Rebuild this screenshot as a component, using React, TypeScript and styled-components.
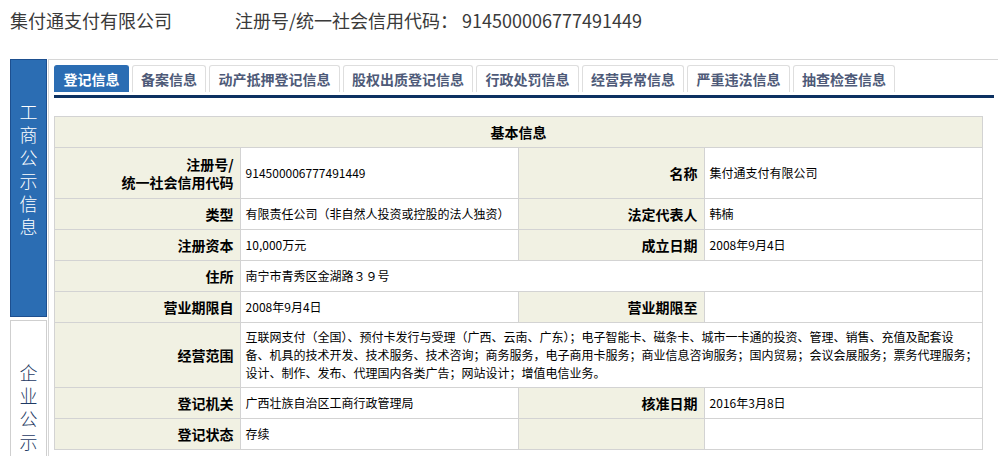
import styled, { createGlobalStyle } from 'styled-components';

const GlobalStyle = createGlobalStyle`
	body {
		margin: 0;
		background: #fff;
		overflow: hidden;
		font-family: "Noto Sans CJK SC", "Liberation Sans", sans-serif;
	}
`;

const Page = styled.div`
	padding: 0 0 0 10px;
`;

const TopBar = styled.div`
	height: 40px;
	display: flex;
	align-items: center;
	font-size: 18px;
	color: #3a3a3a;
	margin-bottom: 19px;
`;

const CompanyName = styled.span`
	width: 225px;
`;

const Body = styled.div`
	display: flex;
	align-items: flex-start;
`;

const SideNav = styled.div`
	width: 37px;
	display: flex;
	flex-direction: column;
	gap: 3px;
	margin-right: 1px;
`;

const SideItem = styled.div<{ $active?: boolean }>`
	box-sizing: border-box;
	height: ${(p) => (p.$active ? '258px' : '160px')};
	border: 1px solid ${(p) => (p.$active ? '#1d4f8f' : '#cfcfcf')};
	background: ${(p) => (p.$active ? '#2b6db3' : '#fff')};
	color: ${(p) => (p.$active ? '#fff' : '#1e3a64')};
	font-size: 18px;
	line-height: 23px;
	text-align: center;
	padding: 40px 8px 0;
	word-break: break-all;
	font-weight: 300;
`;

const Panel = styled.div`
	flex: 1;
	border-top: 1px solid #d6d6d6;
	border-left: 1px solid #d6d6d6;
	padding: 5px 4px 0 5px;
	min-height: 420px;
`;

const TabList = styled.ul`
	list-style: none;
	margin: 0;
	padding: 0 0 3px;
	display: flex;
	gap: 3px;
	border-bottom: 3px solid #0c3161;
`;

const Tab = styled.li<{ $active?: boolean }>`
	box-sizing: border-box;
	height: 27px;
	padding: 0 8px 0 8.5px;
	border: 1px solid ${(p) => (p.$active ? '#2b6db3' : '#dedede')};
	border-bottom: none;
	border-radius: 3px 3px 0 0;
	background: ${(p) => (p.$active ? '#2b6db3' : '#fff')};
	color: ${(p) => (p.$active ? '#fff' : '#4e5a78')};
	font-size: 14px;
	font-weight: 700;
	line-height: 26px;
	white-space: nowrap;
`;

const InfoTable = styled.table`
	width: 929px;
	margin-top: 18px;
	border-collapse: collapse;
	table-layout: fixed;
	border: 1px solid #d3d3d3;
`;

const HeadCell = styled.th`
	background: #f1f1e3;
	border: 1px solid #d3d3d3;
	padding: 6px;
	font-size: 14px;
	line-height: 18px;
	font-weight: 700;
	color: #000;
	text-align: center;
`;

const Label = styled.td<{ $pad?: number }>`
	background: #f1f1e3;
	border: 1px solid #d3d3d3;
	padding: ${(p) => p.$pad ?? 6}px 6px ${(p) => p.$pad ?? 6}px 4px;
	font-size: 14px;
	line-height: 18px;
	font-weight: 700;
	color: #000;
	text-align: right;
	white-space: nowrap;
`;

const Value = styled.td<{ $pad?: number }>`
	background: #fff;
	border: 1px solid #d3d3d3;
	padding: ${(p) => p.$pad ?? 6}px 4px ${(p) => p.$pad ?? 6}px 5px;
	font-size: 12px;
	line-height: 18px;
	color: #000;
	text-align: left;
	white-space: nowrap;
	overflow: hidden;
`;

const tabs = ['登记信息', '备案信息', '动产抵押登记信息', '股权出质登记信息', '行政处罚信息', '经营异常信息', '严重违法信息', '抽查检查信息'];

export default function App() {
	return (
		<Page>
			<GlobalStyle />
			<TopBar>
				<CompanyName>集付通支付有限公司</CompanyName>
				<span>注册号/统一社会信用代码： 914500006777491449</span>
			</TopBar>
			<Body>
				<SideNav>
					<SideItem $active>工商公示信息</SideItem>
					<SideItem>企业公示信息</SideItem>
				</SideNav>
				<Panel>
					<TabList>
						{tabs.map((t, i) => (
							<Tab key={t} $active={i === 0}>
								{t}
							</Tab>
						))}
					</TabList>
					<InfoTable>
						<colgroup>
							<col style={{ width: '20%' }} />
							<col style={{ width: '30%' }} />
							<col style={{ width: '20%' }} />
							<col style={{ width: '30%' }} />
						</colgroup>
						<thead>
							<tr>
								<HeadCell colSpan={4}>基本信息</HeadCell>
							</tr>
						</thead>
						<tbody>
							<tr>
								<Label $pad={7}>
									注册号/
									<br />
									统一社会信用代码
								</Label>
								<Value>914500006777491449</Value>
								<Label>名称</Label>
								<Value>集付通支付有限公司</Value>
							</tr>
							<tr>
								<Label>类型</Label>
								<Value>有限责任公司（非自然人投资或控股的法人独资）</Value>
								<Label>法定代表人</Label>
								<Value>韩楠</Value>
							</tr>
							<tr>
								<Label>注册资本</Label>
								<Value>10,000万元</Value>
								<Label>成立日期</Label>
								<Value>2008年9月4日</Value>
							</tr>
							<tr>
								<Label>住所</Label>
								<Value colSpan={3}>南宁市青秀区金湖路３９号</Value>
							</tr>
							<tr>
								<Label>营业期限自</Label>
								<Value>2008年9月4日</Value>
								<Label>营业期限至</Label>
								<Value></Value>
							</tr>
							<tr>
								<Label $pad={5}>经营范围</Label>
								<Value colSpan={3} $pad={5}>
									互联网支付（全国）、预付卡发行与受理（广西、云南、广东）；电子智能卡、磁条卡、城市一卡通的投资、管理、销售、充值及配套设
									<br />
									备、机具的技术开发、技术服务、技术咨询；商务服务，电子商用卡服务；商业信息咨询服务；国内贸易；会议会展服务；票务代理服务；
									<br />
									设计、制作、发布、代理国内各类广告；网站设计；增值电信业务。
								</Value>
							</tr>
							<tr>
								<Label>登记机关</Label>
								<Value>广西壮族自治区工商行政管理局</Value>
								<Label>核准日期</Label>
								<Value>2016年3月8日</Value>
							</tr>
							<tr>
								<Label>登记状态</Label>
								<Value>存续</Value>
								<Label></Label>
								<Value></Value>
							</tr>
						</tbody>
					</InfoTable>
				</Panel>
			</Body>
		</Page>
	);
}
